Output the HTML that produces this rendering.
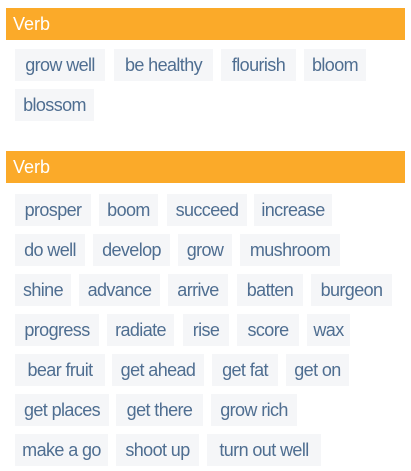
<!DOCTYPE html>
<html><head><style>
body{margin:0;width:411px;height:471px;background:#fff;position:relative;overflow:hidden;font-family:"Liberation Sans",sans-serif}
.h{position:absolute;left:6px;width:399px;height:32px;background:#fbaa29;color:#fff;font-size:18px;line-height:33px;padding-left:7px;box-sizing:border-box}
.c{position:absolute;height:32px;line-height:33px;background:#f5f6f8;color:#4f6e91;font-size:18px;text-align:center;white-space:nowrap;letter-spacing:-0.6px}
</style></head><body>
<div class="h" style="top:8px">Verb</div>
<div class="c" style="top:49px;left:15px;width:90px">grow well</div>
<div class="c" style="top:49px;left:114px;width:99px">be healthy</div>
<div class="c" style="top:49px;left:221px;width:75px">flourish</div>
<div class="c" style="top:49px;left:304px;width:62px">bloom</div>
<div class="c" style="top:89px;left:15px;width:79px">blossom</div>

<div class="h" style="top:151px">Verb</div>
<div class="c" style="top:194px;left:15px;width:76px">prosper</div>
<div class="c" style="top:194px;left:99px;width:59px">boom</div>
<div class="c" style="top:194px;left:167px;width:80px">succeed</div>
<div class="c" style="top:194px;left:254px;width:78px">increase</div>

<div class="c" style="top:234px;left:15px;width:70px">do well</div>
<div class="c" style="top:234px;left:93px;width:77px">develop</div>
<div class="c" style="top:234px;left:178px;width:54px">grow</div>
<div class="c" style="top:234px;left:240px;width:100px">mushroom</div>

<div class="c" style="top:274px;left:15px;width:56px">shine</div>
<div class="c" style="top:274px;left:79px;width:81px">advance</div>
<div class="c" style="top:274px;left:168px;width:60px">arrive</div>
<div class="c" style="top:274px;left:237px;width:66px">batten</div>
<div class="c" style="top:274px;left:311px;width:81px">burgeon</div>

<div class="c" style="top:314px;left:15px;width:84px">progress</div>
<div class="c" style="top:314px;left:107px;width:67px">radiate</div>
<div class="c" style="top:314px;left:183px;width:46px">rise</div>
<div class="c" style="top:314px;left:237px;width:62px">score</div>
<div class="c" style="top:314px;left:307px;width:43px">wax</div>

<div class="c" style="top:354px;left:15px;width:90px">bear fruit</div>
<div class="c" style="top:354px;left:112px;width:92px">get ahead</div>
<div class="c" style="top:354px;left:212px;width:66px">get fat</div>
<div class="c" style="top:354px;left:286px;width:63px">get on</div>

<div class="c" style="top:394px;left:15px;width:94px">get places</div>
<div class="c" style="top:394px;left:116px;width:87px">get there</div>
<div class="c" style="top:394px;left:211px;width:86px">grow rich</div>

<div class="c" style="top:434px;left:15px;width:93px">make a go</div>
<div class="c" style="top:434px;left:116px;width:83px">shoot up</div>
<div class="c" style="top:434px;left:207px;width:114px">turn out well</div>
</body></html>
